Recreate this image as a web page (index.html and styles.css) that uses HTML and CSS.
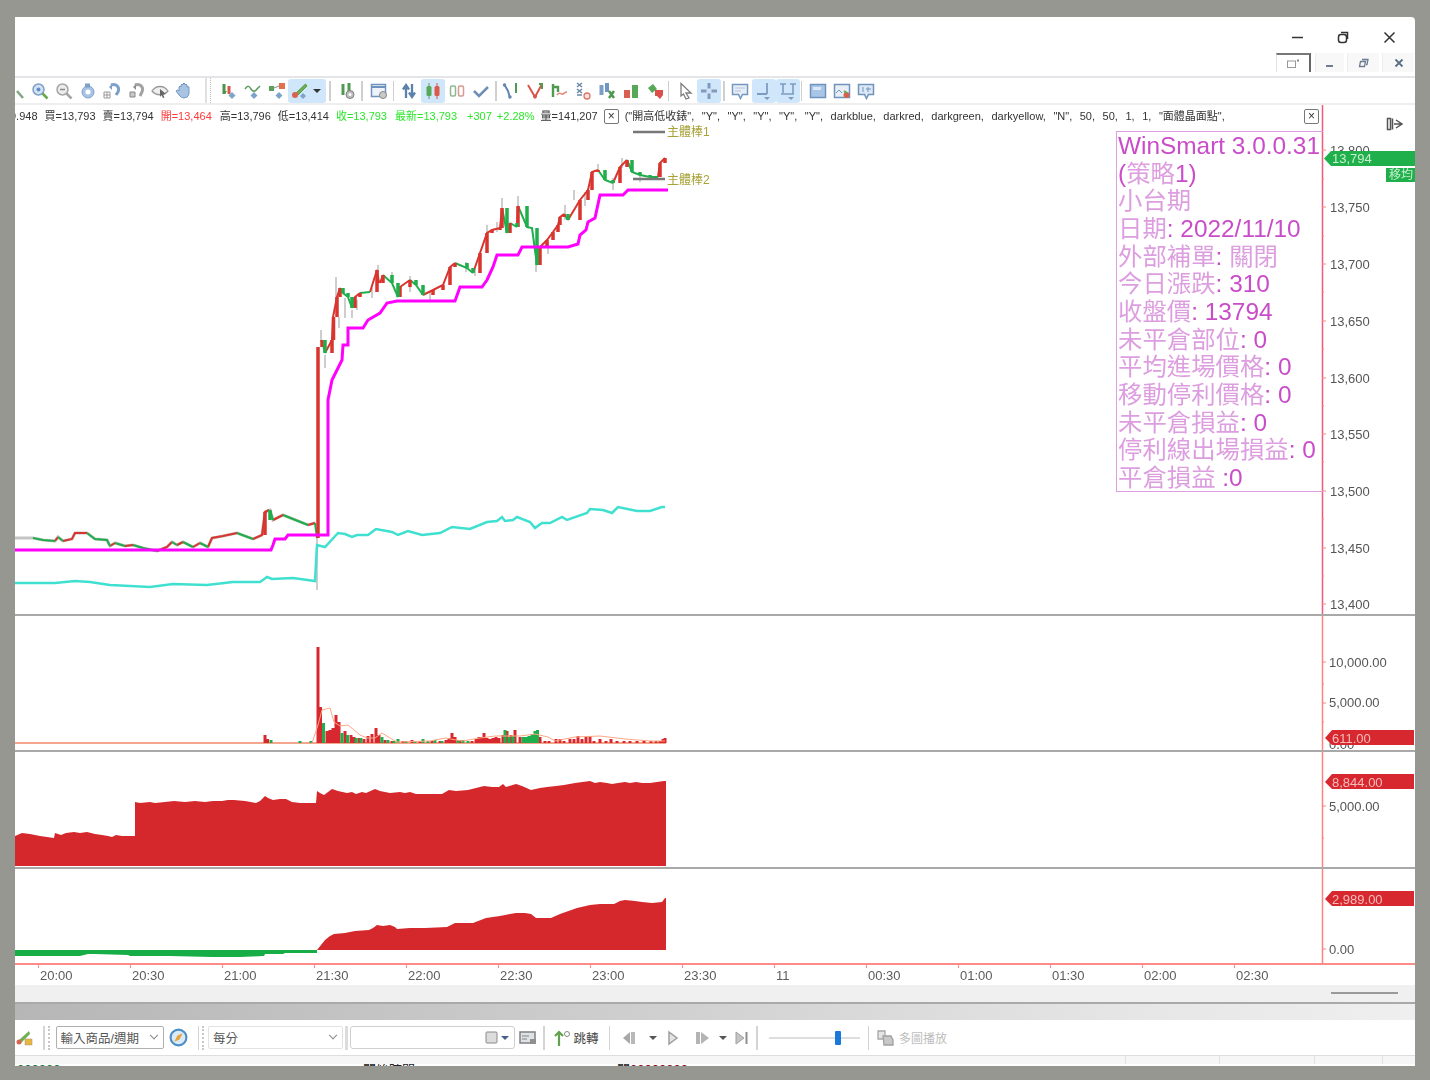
FILE: index.html
```html
<!DOCTYPE html>
<html lang="zh-Hant">
<head>
<meta charset="utf-8">
<title>WinSmart</title>
<link rel="stylesheet" href="styles.css">
</head>
<body>
<div class="window">
<div class="content">

<header class="titlebar">
  <div class="winctl">
    <svg class="wc" viewBox="0 0 16 16"><path d="M3 8.500H14" class="wc-l"/></svg>
    <svg class="wc" viewBox="0 0 16 16"><path d="M6 3.500H12.500V10" class="wc-l"/><rect x="3.500" y="5.500" width="8" height="8" rx="2.500" class="wc-l"/></svg>
    <svg class="wc" viewBox="0 0 16 16"><path d="M3.500 3.500L13.500 13.500M13.500 3.500L3.500 13.500" class="wc-l"/></svg>
  </div>
  <div class="mdictl">
    <div class="mdi-tab"><svg class="mdi-i" viewBox="0 0 14 12"><rect x="1.500" y="3" width="8" height="6.500" fill="none" stroke="#999"/><path d="M11 1.500h2v2h-2z" fill="#888"/></svg></div>
    <div class="mdi-btn"><svg class="mdi-i" viewBox="0 0 14 12"><path d="M3 9H10" stroke="#6b7d93" stroke-width="2"/></svg></div>
    <div class="mdi-btn wide"><svg class="mdi-i" viewBox="0 0 14 12"><path d="M5 2.500h6l-1 5H9M3.500 4.500h5l-1 5h-5z" fill="none" stroke="#6b7d93" stroke-width="1.300"/></svg></div>
    <div class="mdi-btn wide"><svg class="mdi-i" viewBox="0 0 14 12"><path d="M3.500 2.500L10.500 9.500M10.500 2.500L3.500 9.500" stroke="#5b6f88" stroke-width="1.800"/></svg></div>
  </div>
</header>

<nav class="toolbar">
  <span class="tb first"><svg viewBox="0 0 18 18"><path d="M6 2V14M3 5V11" stroke="#9a9a9a" stroke-width="2.500"/><path d="M10 9l6 7" stroke="#7fa77f" stroke-width="2.500"/></svg></span>
  <span class="tb"><svg viewBox="0 0 18 18"><circle cx="7.500" cy="7.500" r="5.500" fill="#d4e3f4" stroke="#7f9fc6" stroke-width="1.500"/><circle cx="7.500" cy="7.500" r="2" fill="#5e8cc4"/><path d="M11.500 11.500L16.500 16.500" stroke="#69a84f" stroke-width="2.500"/></svg></span>
  <span class="tb"><svg viewBox="0 0 18 18"><circle cx="7.500" cy="7.500" r="5.500" fill="#ececec" stroke="#a5a5a5" stroke-width="1.500"/><path d="M5 7.500H10" stroke="#8a8a8a" stroke-width="1.500"/><path d="M11.500 11.500L16.500 16.500" stroke="#a5a5a5" stroke-width="2.500"/></svg></span>
  <span class="tb"><svg viewBox="0 0 18 18"><circle cx="9" cy="10" r="6" fill="#a9c4e2" stroke="#7e9fc8"/><circle cx="9" cy="10" r="2.500" fill="#fff"/><path d="M6 1.500h5v4H6z" fill="#7e9fc8"/></svg></span>
  <span class="tb"><svg viewBox="0 0 18 18"><path d="M8 3c5-2 9 2 7 7l-2 3" fill="none" stroke="#7e9fc8" stroke-width="3"/><path d="M6 5l3-3v6z" fill="#7e9fc8"/><path d="M1 10h6v6H1zM1 13h6M4 10v6" fill="none" stroke="#9a9a9a"/></svg></span>
  <span class="tb"><svg viewBox="0 0 18 18"><path d="M8 3c5-2 9 2 7 7l-2 4" fill="none" stroke="#a2a2a2" stroke-width="3"/><path d="M6 5l3-3v6z" fill="#8e8e8e"/><path d="M3 10h5v5H3z" fill="#c8c8c8" stroke="#888"/></svg></span>
  <span class="tb"><svg viewBox="0 0 18 18"><path d="M1 9c4-6 12-6 16 0-4 5-12 5-16 0z" fill="#eee" stroke="#9a9a9a" stroke-width="1.300"/><path d="M9 7l6 5-3 .5 1.500 3-1.500.5-1.500-3L9 15z" fill="#666"/></svg></span>
  <span class="tb"><svg viewBox="0 0 18 18"><path d="M4 9V5q1-2 2 0V3q1-2 2 0V2q1-2 2 0v1q1-2 2 0v2q1-1 2 0v7q-1 4-5 4-3 0-5-3L1 9q1-2 3 0z" fill="#a9c4e2" stroke="#7499c4"/></svg></span>
  <span class="grip"></span>
  <span class="tb"><svg viewBox="0 0 18 18"><path d="M4 2V12" stroke="#47964a" stroke-width="3"/><path d="M9 4V12" stroke="#d9544a" stroke-width="3"/><path d="M3 9l2 3 2-3z" fill="#47964a"/><path d="M12 10l3.500 3.500L12 17l-3.500-3.500z" fill="#7ea4cc"/></svg></span>
  <span class="tb"><svg viewBox="0 0 18 18"><path d="M1 7c3-4 4-3 6 0s4 3 6 0l3-3" fill="none" stroke="#5c9a5c" stroke-width="1.500"/><path d="M10 10l3.500 3.500L10 17l-3.500-3.500z" fill="#7ea4cc"/></svg></span>
  <span class="tb"><svg viewBox="0 0 18 18"><path d="M1 4h5v5H1z" fill="#5a9f5a"/><path d="M11 1h6v6h-6z" fill="#e0704f"/><path d="M6 6L11 4" stroke="#888"/><path d="M11 10l3.500 3.500L11 17l-3.500-3.500z" fill="#7ea4cc"/></svg></span>
  <span class="tb-split">
    <svg viewBox="0 0 18 18"><path d="M14.500 2L5 11l2 2 9-9z" fill="#6fae55" stroke="#5b9a44"/><circle cx="4" cy="13" r="3" fill="#d9634f"/><path d="M12 11l3 3-3 3-3-3z" fill="#7ea4cc"/></svg>
    <i class="caret"></i>
  </span>
  <span class="bar"></span>
  <span class="tb"><svg viewBox="0 0 18 18"><path d="M5 2V13" stroke="#4f9a50" stroke-width="3"/><path d="M11 1V9" stroke="#4f9a50" stroke-width="3"/><circle cx="12" cy="12.500" r="4" fill="#bcbcbc" stroke="#808080"/><circle cx="12" cy="12.500" r="1.500" fill="#fff"/></svg></span>
  <span class="bar b2"></span>
  <span class="tb"><svg viewBox="0 0 18 18"><rect x="1.500" y="2.500" width="14" height="12" fill="#eef3f9" stroke="#6f93bd" stroke-width="1.500"/><path d="M2 5h13" stroke="#6f93bd" stroke-width="2"/><circle cx="13" cy="13" r="3.500" fill="#c9c9c9" stroke="#888"/></svg></span>
  <span class="bar b3"></span>
  <span class="tb"><svg viewBox="0 0 18 18"><path d="M6 16V5M3 7.500L6 3l3 4.500" fill="none" stroke="#5b82ac" stroke-width="2.300"/><path d="M12 2V13M9 10.500L12 15l3-4.500" fill="none" stroke="#5b82ac" stroke-width="2.300"/></svg></span>
  <span class="tb on"><svg viewBox="0 0 18 18"><path d="M5 1V17" stroke="#5a9d5a"/><path d="M13 1V17" stroke="#d0574a"/><rect x="2.500" y="4" width="5" height="10" rx="1.500" fill="#57a857"/><rect x="10.500" y="4" width="5" height="10" rx="1.500" fill="#db5a4a"/></svg></span>
  <span class="tb"><svg viewBox="0 0 18 18"><rect x="2.500" y="4" width="5" height="10" rx="1.500" fill="#fff" stroke="#8eb98e" stroke-width="1.500"/><rect x="10.500" y="4" width="5" height="10" rx="1.500" fill="#fff" stroke="#d59a90" stroke-width="1.500"/></svg></span>
  <span class="tb"><svg viewBox="0 0 18 18"><path d="M2 9l5 5 9-9" fill="none" stroke="#6f8fb5" stroke-width="2.500"/></svg></span>
  <span class="bar b4"></span>
  <span class="tb"><svg viewBox="0 0 18 18"><path d="M2 2l4 7 2 7" fill="none" stroke="#6288b0" stroke-width="2"/><path d="M14 1V11" stroke="#4f9a50" stroke-width="2"/><circle cx="2.500" cy="3" r="1.700" fill="#6288b0"/><circle cx="8" cy="15" r="1.700" fill="#6288b0"/></svg></span>
  <span class="tb"><svg viewBox="0 0 18 18"><path d="M2 3l7 12 7-13" fill="none" stroke="#d9544a" stroke-width="2"/><path d="M13 2l3 0v5" stroke="#4f9a50" stroke-width="2" fill="none"/><circle cx="9" cy="14.500" r="2" fill="#d9544a"/></svg></span>
  <span class="tb"><svg viewBox="0 0 18 18"><path d="M3 2V15M3 5h5v5" fill="none" stroke="#4f9a50" stroke-width="2.400"/><path d="M7 13c3-4 4 0 6-1s2-2 4-2" fill="none" stroke="#e0887c" stroke-width="1.500"/></svg></span>
  <span class="tb"><svg viewBox="0 0 18 18"><path d="M3 1l5 4M8 1L3 5M3 7l5 4M8 7l-5 4M3 13h5" stroke="#6a88a8" stroke-width="1.500"/><circle cx="13" cy="14" r="3" fill="#fbe3df" stroke="#d9776a" stroke-width="1.300"/></svg></span>
  <span class="tb"><svg viewBox="0 0 18 18"><rect x="1.500" y="3" width="4" height="10" fill="#7aa0c8"/><rect x="7" y="1" width="4" height="9" fill="#6d97c2"/><path d="M11 9l5 7M16 9l-5 7" stroke="#4f9a50" stroke-width="2.500"/></svg></span>
  <span class="tb"><svg viewBox="0 0 18 18"><rect x="2" y="8" width="6" height="8" fill="#d9604f"/><rect x="10" y="3" width="6" height="13" fill="#57a857"/></svg></span>
  <span class="tb"><svg viewBox="0 0 18 18"><path d="M2 6l5-4 4 5-5 4z" fill="#57a857"/><path d="M9 8h8v5l-3 4-3-3H9z" fill="#d9504a"/></svg></span>
  <span class="bar b5"></span>
  <span class="tb"><svg viewBox="0 0 18 18"><path d="M5 1.500L15 11h-5l3 5-3 1-2.500-5L5 14z" fill="#fff" stroke="#7d7d7d" stroke-width="1.300"/></svg></span>
  <span class="tb on"><svg viewBox="0 0 18 18"><path d="M9 1V17M1 9H17" stroke="#7d9cc0" stroke-width="3"/><rect x="6.500" y="6.500" width="5" height="5" fill="#cfe1f3"/></svg></span>
  <span class="bar b6"></span>
  <span class="tb"><svg viewBox="0 0 18 18"><path d="M1.500 2.500h15v10h-5l-2 4-2-4h-6z" fill="#e8eef6" stroke="#7397c0" stroke-width="1.500"/><path d="M4 6h10M4 9h6" stroke="#b0c2d8"/></svg></span>
  <span class="tb on"><svg viewBox="0 0 18 18"><path d="M12 1V12" stroke="#7d9cc0" stroke-width="1.800"/><path d="M2 12h10" stroke="#7d9cc0" stroke-width="2"/><path d="M9 15h6l-3 3z" fill="#7d9cc0"/></svg></span>
  <span class="tb on"><svg viewBox="0 0 18 18"><path d="M1 2h6M4 2V11M11 2h6M14 2V12M2 12h13" stroke="#7d9cc0" stroke-width="1.600"/><path d="M9 15h6l-3 3z" fill="#7d9cc0"/></svg></span>
  <span class="bar b7"></span>
  <span class="tb"><svg viewBox="0 0 18 18"><rect x="1.500" y="2.500" width="15" height="13" fill="#a9c6e6" stroke="#6f93bd" stroke-width="1.500"/><path d="M4 5h8v3H4z" fill="#dbe8f5"/></svg></span>
  <span class="tb"><svg viewBox="0 0 18 18"><rect x="1.500" y="2.500" width="15" height="13" fill="#e8eef6" stroke="#6f93bd" stroke-width="1.500"/><path d="M3 11l3-3 3 3" fill="none" stroke="#6f93bd"/><circle cx="13.500" cy="13" r="3" fill="#d9604f"/><path d="M11 9l3 2" stroke="#57a857" stroke-width="2"/></svg></span>
  <span class="tb"><svg viewBox="0 0 18 18"><path d="M1.500 2.500h15v10h-5l-2 4-2-4h-6z" fill="#dce8f5" stroke="#6f93bd" stroke-width="1.500"/><path d="M6 5v5M11 5v5M9 7h5" stroke="#6f93bd"/></svg></span>
</nav>

<main class="charts">
  <section class="panel p1">
    <svg class="plot" viewBox="15 105 1400 509">
      <path class="wick" d="M336 277V300M321 330V342M325 355V368M339 317V328M352 310V318M378 265V272M466 262V272M475 268V276M487 225V236M497 222V232M502 198V210M518 196V208M536 262V272M565 205V220M574 190V200M598 164V172M622 158V168M345 298V318M357 300V310M372 288V298M392 272V282M410 276V292M430 292V300M548 242V254M585 192V206M613 178V190M640 172V182M317 535V590"/>
      <polyline class="price-base" points="15,538 33,538 43,540 55,541 58,537 63,541 72,539 75,533 87,533 95,539 107,540 110,546 115,543 125,546 133,545 143,548 157,551 167,547 172,542 177,545 183,542 193,547 200,543 208,547 212,538 223,536 237,533 253,539 262,535 265,512 270,510 273,520 283,515 293,519 308,525 315,523"/>
      <path class="up" d="M55 541L58 537M63 541L72 539L75 533L87 533M110 546L115 543M125 546L133 545M157 551L167 547L172 542M177 545L183 542M193 547L200 543M208 547L212 538L223 536L237 533M253 539L262 535L265 512L269 510M273 520L283 515M308 525L315 523M322 347L322 340M325 353L332 340L333 317L337 297L340 288M352 308L355 297L360 293M370 292L377 270L379 283M380 283L383 275M398 297L400 287L410 280M423 295L433 290L443 285L450 267L455 263M473 273L480 253L487 233L492 230L500 228L502 208M507 233L510 223M517 227L518 206M537 265L540 247L547 240L553 232L558 225L560 217L564 214M568 220L580 200L588 190L592 172L598 170M613 183L620 167L627 160M658 177L660 163L665 158"/>
      <path class="down" d="M33 538L43 540L55 541M58 537L63 541M87 533L95 539L107 540L110 546M115 543L125 546M133 545L143 548L157 551M172 542L177 545M183 542L193 547M200 543L208 547M237 533L253 539M270 510L273 520M283 515L293 519L308 525M315 523L317 538M322 340L325 353M340 288L343 293L348 297L352 308M360 293L370 292M383 275L392 283L398 297M410 280L416 285L423 295M455 263L467 268L473 273M502 208L507 233M510 223L517 227M518 206L527 227L532 228L537 265M564 214L568 220M598 170L605 180L613 183M627 160L632 172L640 175L650 177L658 177"/>
      <path class="body-up" d="M318 538V347M322 347V340M332 353V340M333.500 340V317M337 317V297M340 297V288M355 308V297M360 297V293M377 292V270M383 283V275M400 297V287M410 287V280M433 295V290M443 290V285M450 285V267M455 267V263M480 273V253M487 253V233M492 233V230M500 230V228M502 228V208M510 233V223M518 227V206M540 265V247M547 247V240M553 240V232M558 232V225M560 225V217M564 217V214M580 220V200M588 200V190M592 190V172M598 172V170M620 183V167M627 167V160M660 177V163M665 163V158M265 535V512"/>
      <path class="body-down" d="M325 340V353M343 288V293M348 293V297M352 297V308M392 275V283M398 283V297M416 280V285M423 285V295M467 263V268M473 268V273M507 208V233M517 223V227M527 206V227M537 228V265M568 214V220M605 170V180M613 180V183M632 160V172M640 172V175M650 175V177M270 510V520"/>
      <path class="ma" d="M15 550H271L273 545L275 539H285L288 535H328V400L332 380L337 370L342 360L343 345H348V328H363L368 320L380 313L387 303L397 301H455L460 287H482L487 280L493 267L497 255H518L522 247H568L578 244L580 235L586 230L588 222L595 218L600 195H623L628 190H668"/>
      <polyline class="teal" points="15,583 55,583 75,581 90,582 110,585 150,587 173,584 207,585 233,582 260,582 267,577 272,579 293,578 315,581 317,545 325,547 338,533 345,534 352,537 357,535 368,535 376,529 392,532 398,535 408,531 422,535 440,533 452,527 470,529 487,522 497,521 502,517 505,521 513,520 517,517 530,522 535,528 542,523 550,523 562,517 567,520 587,513 590,509 603,510 612,513 618,507 637,511 650,511 662,507 665,507"/>
      <path class="leg-line" d="M633 132H665M633 179H665"/>
      <text class="leg-name" x="667" y="136">主體棒1</text>
      <text class="leg-name" x="667" y="184">主體棒2</text>
      <path class="axis-hot" d="M1322.500 105V614"/>
      <path class="tick" d="M1322 150h4M1322 207h4M1322 264h4M1322 321h4M1322 378h4M1322 434h4M1322 491h4M1322 548h4M1322 604h4M1322 179h2M1322 236h2M1322 292h2M1322 349h2M1322 406h2M1322 462h2M1322 519h2M1322 576h2"/>
      <text class="ax" x="1330" y="155">13,800</text>
      <text class="ax" x="1330" y="212">13,750</text>
      <text class="ax" x="1330" y="269">13,700</text>
      <text class="ax" x="1330" y="326">13,650</text>
      <text class="ax" x="1330" y="383">13,600</text>
      <text class="ax" x="1330" y="439">13,550</text>
      <text class="ax" x="1330" y="496">13,500</text>
      <text class="ax" x="1330" y="553">13,450</text>
      <text class="ax" x="1330" y="609">13,400</text>
      <path class="tag-g" d="M1324 158.500L1331 151H1415V166H1331z"/>
      <text class="tag-t" x="1332" y="163">13,794</text>
      <rect class="tag-g" x="1386" y="168" width="29" height="14"/>
      <text class="tag-s" x="1389" y="179">移均</text>
      <path class="side" d="M1387.500 118.500h3v11h-3zM1392.500 118.500v11M1396 120l6 4-6 4M1394 124h7" />
    </svg>
    <div class="legend">
      <span class="lg g0">9.948</span>
      <span class="lg g1">買=13,793</span>
      <span class="lg g2">賣=13,794</span>
      <span class="lg red g3">開=13,464</span>
      <span class="lg g4">高=13,796</span>
      <span class="lg g5">低=13,414</span>
      <span class="lg lime g6">收=13,793</span>
      <span class="lg lime g7">最新=13,793</span>
      <span class="lg lime g8">+307</span>
      <span class="lg lime g9">+2.28%</span>
      <span class="lg g10">量=141,207</span>
      <span class="xbox g11">×</span>
      <span class="lg formula">("開高低收錶", "Y", "Y", "Y", "Y", "Y", darkblue, darkred, darkgreen, darkyellow, "N", 50, 50, 1, 1, "面體晶面點",</span>
      <span class="xbox end">×</span>
    </div>
    <div class="info">
      <div class="ln">WinSmart 3.0.0.31</div>
      <div class="ln"><b>(</b>策略<b>1)</b></div>
      <div class="ln">小台期</div>
      <div class="ln">日期<b>: 2022/11/10</b></div>
      <div class="ln">外部補單<b>: </b>關閉</div>
      <div class="ln">今日漲跌<b>: 310</b></div>
      <div class="ln">收盤價<b>: 13794</b></div>
      <div class="ln">未平倉部位<b>: 0</b></div>
      <div class="ln">平均進場價格<b>: 0</b></div>
      <div class="ln">移動停利價格<b>: 0</b></div>
      <div class="ln">未平倉損益<b>: 0</b></div>
      <div class="ln">停利線出場損益<b>: 0</b></div>
      <div class="ln">平倉損益 <b>:0</b></div>
    </div>
  </section>
  <section class="panel p2">
    <svg class="plot" viewBox="15 616 1400 134">
      <path class="base" d="M15 743H666"/>
      <path class="vol-r" d="M265 743V735M267.500 743V739M318 743V647M320.500 743V707M327 743V731M330 743V730M333 743V728M336 743V715M339 743V722M345 743V731M351 743V735M354 743V737M359 743V738M364 743V739M368 743V736M372 743V734M376 743V728M379 743V735M385 743V740M392 743V741M403 743V741M412 743V740M420 743V741M432 743V741M440 743V741M446 743V740M449 743V738M452 743V733M455 743V737M460 743V740M472 743V741M476 743V739M479 743V737M482 743V737M484 743V733M487 743V738M490 743V739M493 743V738M496 743V737M499 743V738M503 743V735M507 743V731M511 743V735M515 743V730M520 743V737M540 743V737M545 743V741M549 743V741M556 743V739M560 743V739M564 743V741M570 743V739M574 743V739M578 743V736M582 743V739M586 743V737M590 743V736M594 743V741M600 743V739M606 743V741M611 743V739M617 743V741M624 743V741M630 743V741M637 743V741M644 743V740M651 743V741M656 743V741M660 743V741M663 743V739M665 743V738"/>
      <path class="vol-g" d="M271 743V740M300 743V741M311 743V741M323.500 743V723M342 743V733M347.500 743V735M356 743V738M361 743V738M382 743V737M388 743V740M394 743V741M398 743V739M406 743V741M415 743V741M423 743V739M428 743V741M435 743V740M442 743V741M458 743V740M463 743V740M468 743V741M505 743V730M509 743V737M513 743V736M523 743V737M526 743V737M529 743V736M532 743V734M535 743V731M537.500 743V730"/>
      <polyline class="vma" points="312,743 318,725 322,710 330,708 334,722 340,726 348,725 360,735 367,738 375,738 382,733 390,738 397,742 430,741 445,738 462,741 480,738 495,736 520,736 535,734 548,737 555,741 575,737 600,736 625,739 650,741 665,741"/>
      <path class="axis" d="M1322.500 616V750"/>
      <path class="tick" d="M1322 662h4M1322 703h4M1322 684h2M1322 722h2"/>
      <text class="ax" x="1329" y="667">10,000.00</text>
      <text class="ax" x="1329" y="707">5,000.00</text>
      <text class="ax" x="1329" y="749">0.00</text>
      <path class="tag-r" d="M1325 738L1332 730H1414V745H1332z"/>
      <text class="tag-t r" x="1332" y="743">611.00</text>
    </svg>
  </section>
  <section class="panel p3">
    <svg class="plot" viewBox="15 752 1400 115">
      <path class="fill-r" d="M15 836L22 833L30 834L40 836L54 838L55 833L58 834L61 835L66 833L74 832L80 833L87 832L95 834L102 835L108 836L112 837L116 835L122 836L128 836L135 836V802L140 803L150 802L155 803L165 802L174 801L185 802L195 801L205 802L213 801L222 801L228 800L234 800L245 801L256 803L260 801L265 796L268 798L273 800L280 799L286 799L292 802L300 803L316 803L317 791L320 793L324 795L328 792L332 789L338 791L347 793L352 792L356 794L362 792L366 793L375 789L380 791L390 793L400 792L405 793L410 792L416 794L430 794L442 794L449 790L456 791L468 790L476 788L484 786L492 787L499 787L503 784L506 787L516 784L522 786L531 790L540 788L547 787L556 786L564 785L575 783L590 781L595 783L600 782L607 783L612 784L618 783L625 782L630 783L636 782L642 783L650 783L664 781H666V866H15z"/>
      <path class="axis" d="M1322.500 752V867"/>
      <path class="tick" d="M1322 806h4M1322 838h2"/>
      <text class="ax" x="1329" y="811">5,000.00</text>
      <path class="tag-r" d="M1325 782L1332 774H1414V789H1332z"/>
      <text class="tag-t r" x="1332" y="787">8,844.00</text>
    </svg>
  </section>
  <section class="panel p4">
    <svg class="plot" viewBox="15 869 1400 94">
      <path class="fill-g" d="M15 950H317V953H285L283 954H265L264 956L240 957L212 957L170 956L130 956L128 955L95 954L88 954L80 956H15z"/>
      <path class="fill-r" d="M317 950L325 940L330 936L334 934L345 933L355 931L369 930L373 928L377 925L383 926L390 925L395 927L397 929L410 928L425 928L447 927L455 923L465 923L473 923L486 918L500 916L510 914L516 913L525 913L531 914L536 918L551 918L560 914L577 908L590 905L600 904L614 904L620 901L625 900L635 901L642 902L652 903L662 902L665 898H666V950z"/>
      <path class="axis" d="M1322.500 869V963"/>
      <path class="tick" d="M1322 949h4"/>
      <text class="ax" x="1329" y="954">0.00</text>
      <path class="tag-r" d="M1325 899L1332 891H1414V906H1332z"/>
      <text class="tag-t r" x="1332" y="904">2,989.00</text>
    </svg>
  </section>
</main>

<div class="timeaxis">
  <span class="t">20:00</span><span class="t">20:30</span><span class="t">21:00</span><span class="t">21:30</span><span class="t">22:00</span><span class="t">22:30</span><span class="t">23:00</span><span class="t">23:30</span><span class="t">11</span><span class="t">00:30</span><span class="t">01:00</span><span class="t">01:30</span><span class="t">02:00</span><span class="t">02:30</span>
</div>
<div class="scrollstrip"><span class="thumb"></span></div>
<div class="gradstrip"></div>

<footer class="playbar">
  <svg class="pb-first" viewBox="0 0 18 18"><path d="M14 2L4 11l2 3 9-9z" fill="#6fae55"/><circle cx="4" cy="13" r="2.500" fill="#d9634f"/><rect x="10" y="10" width="7" height="6" fill="#e6b93c" stroke="#a88" stroke-width=".500"/></svg>
  <span class="pb-sep s1"></span><span class="pb-grip"></span>
  <div class="select s-a"><span>輸入商品/週期</span><i class="chev"></i></div>
  <svg class="compass" viewBox="0 0 18 18"><circle cx="9" cy="9" r="7.500" fill="#dbeaf7" stroke="#4d8fc4" stroke-width="2"/><path d="M5 13l3-6 5-2-3 6z" fill="#e8a33d"/></svg>
  <span class="pb-sep s2"></span><span class="pb-grip g-b"></span>
  <div class="select s-b"><span>每分</span><i class="chev"></i></div>
  <span class="pb-thick"></span>
  <div class="date">
    <svg class="cal" viewBox="0 0 14 14"><rect x="1" y="1" width="11" height="11" rx="1" fill="#dcdcdc" stroke="#8a8a8a"/></svg>
    <i class="caret blue"></i>
  </div>
  <svg class="pb-ic i-a" viewBox="0 0 18 18"><rect x="1" y="3" width="15" height="11" fill="#dfe3e8" stroke="#808080" stroke-width="1.500"/><path d="M3 7h7M3 10h5" stroke="#808080"/><path d="M11 10h6v5h-6z" fill="#909090"/></svg>
  <span class="pb-sep s3"></span>
  <svg class="pb-ic i-b" viewBox="0 0 18 18"><path d="M6 17V3M2 7l4-4 4 4" fill="none" stroke="#62a24f" stroke-width="2.200"/><circle cx="14" cy="5" r="2.500" fill="#fff" stroke="#888"/></svg>
  <span class="pb-label">跳轉</span>
  <span class="pb-sep s4"></span>
  <svg class="pb-ic i-c" viewBox="0 0 18 18"><path d="M9 3L2 9l7 6z" fill="#a8a8a8"/><rect x="10" y="3" width="4" height="12" fill="#b8b8b8"/></svg>
  <i class="caret dark c1"></i>
  <svg class="pb-ic i-d" viewBox="0 0 18 18"><path d="M5 3l8 6-8 6z" fill="#e4e4e4" stroke="#a0a0a0" stroke-width="1.500"/></svg>
  <svg class="pb-ic i-e" viewBox="0 0 18 18"><rect x="3" y="3" width="4" height="12" fill="#b4b4b4"/><path d="M8 3l8 6-8 6z" fill="#b4b4b4"/></svg>
  <i class="caret dark c2"></i>
  <svg class="pb-ic i-f" viewBox="0 0 18 18"><path d="M3 3l8 6-8 6z" fill="#c4c4c4" stroke="#a0a0a0"/><path d="M13.500 3V15" stroke="#8e8e8e" stroke-width="2"/></svg>
  <span class="pb-sep s5"></span>
  <div class="slider"><span class="knob"></span></div>
  <span class="pb-sep s6"></span>
  <svg class="pb-ic i-g" viewBox="0 0 18 18"><path d="M2 2h7v8H2z" fill="#e4e4e4" stroke="#a8a8a8" stroke-width="1.300"/><path d="M7 7h8l2 4v5H8z" fill="#c8c8c8" stroke="#a0a0a0" stroke-width="1.300"/></svg>
  <span class="pb-off">多圖播放</span>
</footer>

<div class="status"><span class="cell c-a"></span><span class="cell"></span><span class="cell"></span><span class="cell c-d"></span></div>
<div class="clipline"><span class="cl-a">000000</span><span class="cl-b">開始時間</span><span class="cl-c">開<em>00000000</em></span></div>

</div>
</div>
</body>
</html>
```
FILE: styles.css
```css
* { box-sizing: border-box; }
html, body { margin: 0; padding: 0; }
body {
  width: 1430px;
  height: 1080px;
  overflow: hidden;
  background: #979791;
  padding: 17px 15px 14px;
  font-family: "Liberation Sans", "Noto Sans CJK TC", sans-serif;
}
.window {
  width: 1400px;
  height: 1049px;
  background: #fff;
  overflow: hidden;
  border-top-right-radius: 4px;
}
.content {
  display: flex;
  flex-direction: column;
  width: 1400px;
  height: 1049px;
  filter: blur(0.7px);
}

/* title bar */
.titlebar { height: 61px; display: flex; flex-direction: column; align-items: flex-end; flex: none; border-bottom: 2px solid #e4e5e9; }
.winctl { height: 36px; display: flex; align-items: flex-start; padding-right: 18px; gap: 30px; padding-top: 12px; }
.wc { width: 16px; height: 16px; display: block; }
.wc-l { fill: none; stroke: #333; stroke-width: 1.500; }
.mdictl { display: flex; height: 19px; align-items: stretch; padding-right: 1px; gap: 3px; }
.mdi-tab { width: 35px; border-top: 2px solid #777; border-right: 2px solid #666; border-left: 1px solid #e2e2e2; display: flex; align-items: center; justify-content: center; margin-right: 1px; }
.mdi-btn { width: 29px; background: #f8f8f8; border-left: 1px solid #eee; display: flex; align-items: center; justify-content: center; }
.mdi-btn.wide { width: 32px; }
.mdi-i { width: 14px; height: 12px; display: block; }

/* main toolbar */
.toolbar { height: 27px; flex: none; display: flex; align-items: center; border-bottom: 2px solid #eeeeee; background: #fff; }
.tb { width: 24px; height: 24px; flex: none; display: flex; align-items: center; justify-content: center; border-radius: 3px; }
.tb svg, .tb-split svg { width: 18px; height: 18px; display: block; }
.tb.first { margin-left: -11px; }
.tb.on { background: #cfe6fb; }
.grip { width: 6px; height: 25px; flex: none; margin: 0 6px 0 9px; border-left: 2px solid #e0e0e0; border-right: 1px dotted #bbb; }
.tb-split { width: 38px; height: 24px; flex: none; display: flex; align-items: center; padding-left: 3px; gap: 4px; background: #cfe6fb; border-radius: 3px; margin-left: -1px; }
.caret { width: 0; height: 0; border-left: 4px solid transparent; border-right: 4px solid transparent; border-top: 4px solid #333; display: block; flex: none; }
.bar { width: 1.500px; height: 20px; background: #cfcfcf; flex: none; margin: 0 4px 0 3px; }
.bar.b2 { margin: 0 4px 0 2.500px; }
.bar.b3 { margin: 0 3px 0 2px; }
.bar.b4 { margin: 0 2px 0 2px; }
.bar.b5 { margin: 0 4px 0 1px; }
.bar.b6 { margin: 0 3px 0 2px; }
.bar.b7 { margin: 0 4px 0 1px; }

/* charts */
.charts { flex: none; display: flex; flex-direction: column; height: 858px; }
.panel { position: relative; flex: none; border-bottom: 2px solid #a9a9a9; }
.p1 { height: 511px; }
.p2 { height: 136px; }
.p3 { height: 117px; }
.p4 { height: 94px; border-bottom: 0; }
.plot { display: block; width: 1400px; height: 100%; }

.wick { fill: none; stroke: #bfbfbf; stroke-width: 1.500; }
.price-base { fill: none; stroke: #c4c4c4; stroke-width: 3; }
.up { fill: none; stroke: #d8352e; stroke-width: 2; }
.down { fill: none; stroke: #1fae4b; stroke-width: 2; }
.body-up { fill: none; stroke: #d8352e; stroke-width: 3.500; }
.body-down { fill: none; stroke: #1fae4b; stroke-width: 3.500; }
.ma { fill: none; stroke: #ff00ff; stroke-width: 3; }
.teal { fill: none; stroke: #40e0d0; stroke-width: 2.500; }
.leg-line { fill: none; stroke: #777; stroke-width: 2.500; }
.leg-name { font-size: 12px; fill: #a8a238; }
.axis-hot { fill: none; stroke: #f0587e; stroke-width: 1.500; }
.axis { fill: none; stroke: #ff8080; stroke-width: 1.500; }
.tick { fill: none; stroke: #ff8080; stroke-width: 1; }
.ax { font-size: 13px; fill: #555; }
.tag-g { fill: #1fb04b; }
.tag-r { fill: #d8282f; }
.tag-t { font-size: 13px; fill: #c8efd0; }
.tag-t.r { fill: #f6bcbc; }
.tag-s { font-size: 12px; fill: #c8efd0; }
.side { fill: none; stroke: #555; stroke-width: 1.500; }
.base { fill: none; stroke: #f08a68; stroke-width: 1.500; }
.vol-r { fill: none; stroke: #d8282f; stroke-width: 3; }
.vol-g { fill: none; stroke: #1fae4b; stroke-width: 3; }
.vma { fill: none; stroke: #ffa680; stroke-width: 1; }
.fill-r { fill: #d5282d; }
.fill-g { fill: #16ad46; }

/* legend overlay */
.legend { position: absolute; left: 0; top: 4px; width: 1400px; height: 14px; display: flex; align-items: center; font-size: 11px; line-height: 14px; color: #333; white-space: nowrap; }
.lg { flex: none; }
.g0 { margin-left: -5px; }
.g1 { margin-left: 7px; }
.g2, .g3, .g5, .g6 { margin-left: 7px; }
.g4, .g7 { margin-left: 8px; }
.g8 { margin-left: 10px; }
.g9 { margin-left: 5px; }
.g10 { margin-left: 6px; }
.red { color: #ff3b3b; }
.lime { color: #2ce82c; }
.xbox { flex: none; width: 15px; height: 15px; border: 1.500px solid #777; border-radius: 2px; font-size: 12px; line-height: 12px; text-align: center; color: #333; }
.g11 { margin-left: 6px; }
.formula { margin-left: 6px; word-spacing: 4.500px; }
.xbox.end { position: absolute; left: 1289px; top: 0; }

/* info box */
.info { position: absolute; left: 1101px; top: 26px; width: 207px; height: 361px; border: 1.500px solid #dd9fdd; border-right: 0; overflow: hidden; font-size: 24.400px; line-height: 27.670px; color: #dd9ee0; padding-left: 1px; }
.ln { height: 27.670px; white-space: nowrap; }
.ln:first-child { color: #c94cc8; }
.ln b { font-weight: 400; color: #c94cc8; }

/* time axis */
.timeaxis { height: 22px; flex: none; border-top: 2px solid #ff8a8a; display: grid; grid-template-columns: repeat(14, 92px); padding-left: 23px; background: #fff; }
.t { position: relative; font-size: 13px; line-height: 22px; color: #5c5c5c; padding-left: 2px; }
.t::before { content: ""; position: absolute; left: 0; top: 0; width: 1px; height: 3px; background: #ff8a8a; }
.scrollstrip { height: 17px; flex: none; background: #f0f0f0; position: relative; }
.thumb { position: absolute; left: 1316px; top: 7px; width: 67px; height: 2px; background: #9a9a9a; }
.gradstrip { height: 18px; flex: none; border-top: 2px solid #a9a9a9; background: linear-gradient(90deg, #b6b6b6 0%, #cfcfcf 45%, #e6e6e6 80%, #efefef 100%); }

/* bottom playback toolbar */
.playbar { height: 35px; flex: none; display: flex; align-items: center; background: #fff; }
.pb-first { width: 18px; height: 18px; flex: none; }
.pb-sep { width: 1.500px; height: 24px; background: #d4d4d4; flex: none; }
.pb-sep.s1 { margin-left: 10px; }
.pb-sep.s2 { margin-left: 10px; }
.pb-grip { width: 3px; height: 24px; flex: none; margin: 0 5px 0 3px; border-left: 2px dotted #c8c8c8; }
.pb-grip.g-b { margin-right: 3px; }
.select { height: 23px; flex: none; display: flex; align-items: center; justify-content: space-between; font-size: 12.500px; color: #555; padding: 0 6px 0 4px; }
.select.s-a { width: 108px; border: 1.500px solid #b0b0b0; border-radius: 2px; }
.select.s-b { width: 135px; border: 1.500px solid #e2e2e2; border-radius: 2px; }
.chev { width: 6px; height: 6px; display: block; border-right: 1.500px solid #888; border-bottom: 1.500px solid #888; transform: rotate(45deg) translate(-2px, -2px); flex: none; }
.compass { width: 19px; height: 19px; flex: none; margin-left: 5px; }
.pb-thick { width: 3px; height: 24px; background: #dcdcdc; flex: none; margin: 0 2px 0 2px; }
.date { width: 165px; height: 23px; flex: none; border: 1.500px solid #cfcfcf; border-radius: 3px; display: flex; align-items: center; justify-content: flex-end; gap: 2px; padding-right: 5px; }
.cal { width: 14px; height: 14px; display: block; }
.caret.blue { border-top-color: #44618a; }
.caret.dark { border-top-color: #555; }
.pb-ic { width: 18px; height: 18px; flex: none; display: block; }
.i-a { margin-left: 4px; }
.pb-sep.s3 { margin-left: 6px; }
.i-b { margin-left: 8px; }
.pb-label { font-size: 12.500px; color: #444; margin-left: 3px; flex: none; }
.pb-sep.s4 { margin-left: 10px; }
.i-c { margin-left: 11px; }
.c1 { margin-left: 10px; }
.i-d { margin-left: 7px; }
.i-e { margin-left: 11px; }
.c2 { margin-left: 8px; }
.i-f { margin-left: 6px; }
.pb-sep.s5 { margin-left: 5px; }
.slider { width: 91px; height: 16px; flex: none; margin-left: 11px; position: relative; }
.slider::before { content: ""; position: absolute; left: 0; right: 0; top: 7px; height: 2px; background: #dedede; }
.knob { position: absolute; left: 66px; top: 1px; width: 6px; height: 14px; background: #1a78d8; border-radius: 1px; }
.pb-sep.s6 { margin-left: 8px; }
.i-g { margin-left: 7px; }
.pb-off { font-size: 12px; color: #bdbdbd; margin-left: 5px; flex: none; }

/* status */
.status { height: 9px; flex: none; background: #f6f6f6; border-top: 1px solid #dedede; display: grid; grid-template-columns: 1111px 94px 95px 68px 1fr; }
.cell { border-right: 1px solid #e2e2e2; }
.clipline { height: 2px; flex: none; overflow: hidden; background: #fff; display: flex; font-size: 13px; line-height: 12px; color: #222; }
.cl-a { width: 348px; padding-left: 2px; color: #1a7a3a; }
.cl-b { width: 254px; }
.cl-c em { color: #8a1020; font-style: normal; }
```
